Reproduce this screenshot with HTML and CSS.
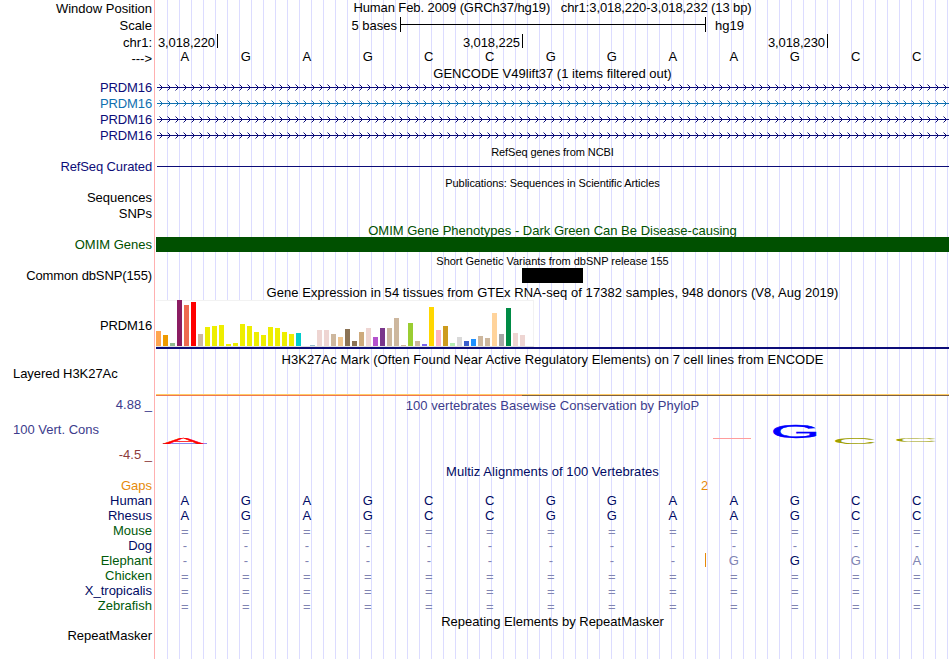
FILE: index.html
```html
<!DOCTYPE html>
<html lang="en">
<head>
  <meta charset="UTF-8">
  <meta name="viewport" content="width=device-width, initial-scale=1.0">
  <title>chr1:3,018,220-3,018,232</title>
  <link rel="stylesheet" href="styles.css">
</head>
<body>
  <div class="browser">
    <!-- Ruler -->
    <div class="row h17"><div class="label">Window Position</div><div class="data title up">Human Feb. 2009 (GRCh37/hg19) &nbsp; chr1:3,018,220-3,018,232 (13 bp)</div></div>
    <div class="row h17">
      <div class="label">Scale</div>
      <div class="data scale">
        <span class="scale-left">5 bases</span>
        <span class="scale-bar"></span>
        <span>hg19</span>
      </div>
    </div>
    <div class="row h16">
      <div class="label lower">chr1:</div>
      <div class="data ruler">
        <span class="first">3,018,220</span>
        <span>3,018,225</span>
        <span>3,018,230</span>
      </div>
    </div>
    <div class="row h16"><div class="label lower">---&gt;</div><div class="data bases dark" data-bases="AGAGCCGGAAGCC"></div></div>

    <!-- Genes -->
    <div class="row h14"><div class="label"></div><div class="data title gencode">GENCODE V49lift37 (1 items filtered out)</div></div>
    <div class="row h16 gene"><div class="label tight">PRDM16</div><div class="data"><svg class="arrows" width="792" height="7"></svg></div></div>
    <div class="row h16 gene light"><div class="label tight">PRDM16</div><div class="data"><svg class="arrows" width="792" height="7"></svg></div></div>
    <div class="row h16 gene"><div class="label tight">PRDM16</div><div class="data"><svg class="arrows" width="792" height="7"></svg></div></div>
    <div class="row h16 gene"><div class="label tight">PRDM16</div><div class="data"><svg class="arrows" width="792" height="7"></svg></div></div>
    <div class="row h15"><div class="label"></div><div class="data title small">RefSeq genes from NCBI</div></div>
    <div class="row h16 gene"><div class="label tight">RefSeq Curated</div><div class="data"><div class="refseq-line"></div></div></div>
    <div class="row h15"><div class="label"></div><div class="data title small">Publications: Sequences in Scientific Articles</div></div>
    <div class="row h16"><div class="label">Sequences</div><div class="data"></div></div>
    <div class="row h16"><div class="label">SNPs</div><div class="data"></div></div>

    <!-- Variants -->
    <div class="row h15 omim"><div class="label"></div><div class="data title lower">OMIM Gene Phenotypes - Dark Green Can Be Disease-causing</div></div>
    <div class="row h16 omim"><div class="label">OMIM Genes</div><div class="data"><div class="omim-bar"></div></div></div>
    <div class="row h15"><div class="label"></div><div class="data title small snp-title">Short Genetic Variants from dbSNP release 155</div></div>
    <div class="row h16"><div class="label tight">Common dbSNP(155)</div><div class="data"><div class="snp"></div></div></div>

    <!-- Expression -->
    <div class="row h16"><div class="label"></div><div class="data title lower wide">Gene Expression in 54 tissues from GTEx RNA-seq of 17382 samples, 948 donors (V8, Aug 2019)</div></div>
    <div class="row h49">
      <div class="label tight">PRDM16</div>
      <div class="data gtex">
        <div class="bars" id="gtexBars"></div>
      </div>
    </div>
    <div class="row h17"><div class="label"></div><div class="data title low wide">H3K27Ac Mark (Often Found Near Active Regulatory Elements) on 7 cell lines from ENCODE</div></div>
    <div class="row h31">
      <div class="label left">Layered H3K27Ac</div>
      <div class="data layered"><div class="layered-line"></div></div>
    </div>

    <!-- Conservation -->
    <div class="row h66 phylop">
      <div class="label cons">
        <span>4.88 _</span>
        <span class="cons-name">100 Vert. Cons</span>
        <span class="cons-min">-4.5 _</span>
      </div>
      <div class="data cons-data">
        <div class="title">100 vertebrates Basewise Conservation by PhyloP</div>
        <svg class="logo" width="793" height="50">
          <rect x="7" y="30" width="44" height="1" fill="#8888ee"/>
          <text transform="translate(7 30.6) scale(3.05 .42)" fill="#ff0000" stroke="#ff0000" stroke-width=".5">A</text>
          <rect x="557" y="25" width="38" height="1" fill="#ff9c9c"/>
          <text transform="translate(614.5 24.8) scale(3.2 .88)" fill="#0000ff" stroke="#0000ff" stroke-width=".4">G</text>
          <text transform="translate(676 31) scale(3.15 .42)" fill="#a0a000">C</text>
          <text transform="translate(737 29) scale(3.15 .28)" fill="#a0a000">C</text>
        </svg>
      </div>
    </div>

    <!-- Alignment -->
    <div class="multiz">
      <div class="row h15"><div class="label"></div><div class="data title wide">Multiz Alignments of 100 Vertebrates</div></div>
      <div class="row species gaps"><div class="label">Gaps</div><div class="data"><span class="gap-count">2</span></div></div>
      <div class="row species"><div class="label">Human</div><div class="data bases" data-bases="AGAGCCGGAAGCC"></div></div>
      <div class="row species"><div class="label">Rhesus</div><div class="data bases" data-bases="AGAGCCGGAAGCC"></div></div>
      <div class="row species green"><div class="label">Mouse</div><div class="data bases" data-bases="============="></div></div>
      <div class="row species"><div class="label">Dog</div><div class="data bases" data-bases="-------------"></div></div>
      <div class="row species green"><div class="label">Elephant</div><div class="data bases" data-bases="---------|gGga"></div></div>
      <div class="row species green"><div class="label">Chicken</div><div class="data bases" data-bases="============="></div></div>
      <div class="row species"><div class="label">X_tropicalis</div><div class="data bases" data-bases="============="></div></div>
      <div class="row species green"><div class="label">Zebrafish</div><div class="data bases" data-bases="============="></div></div>
    </div>
    <div class="row h15"><div class="label"></div><div class="data title">Repeating Elements by RepeatMasker</div></div>
    <div class="row rest"><div class="label">RepeatMasker</div><div class="data"></div></div>
  </div>

  <script>
    // Bases: lower case is a mismatch, | is an insert before the next base
    document.querySelectorAll('.bases').forEach(row => {
      let insert = false;
      for (const c of row.dataset.bases) {
        if (c === '|') {
          insert = true;
          continue;
        }
        const cell = document.createElement('span');
        cell.textContent = c.toUpperCase();
        if (c === '=' || c === '-' || c !== c.toUpperCase()) cell.classList.add('faded');
        if (c === '=') cell.classList.add('equal');
        if (insert) cell.classList.add('insert');
        insert = false;
        row.appendChild(cell);
      }
    });

    // Intron lines with strand arrows every 8px
    let heads = '';
    for (let x = 2.5; x < 792; x += 8) {
      heads += `M${x} .5l3 3l-3 3`;
    }
    document.querySelectorAll('.arrows').forEach(svg => {
      svg.innerHTML = `<path class="intron" d="M0 3.5H792"/><path class="heads" d="${heads}"/>`;
    });

    // GTEx tissues: [height, color]
    const tissues = [
      [15, '#ffa54f'], [11, '#ee9a00'], [3, '#8fbc8f'], [46, '#8b1c62'], [41, '#ee6a50'], [44, '#ff0000'],
      [12, '#cdb79e'], [19, '#eeee00'], [20, '#eeee00'], [21, '#eeee00'], [2, '#eeee00'], [3, '#eeee00'],
      [22, '#eeee00'], [20, '#eeee00'], [14, '#eeee00'], [11, '#eeee00'], [19, '#eeee00'], [18, '#eeee00'],
      [14, '#eeee00'], [12, '#eeee00'], [13, '#00cdcd'], [0, '#ee82ee'], [1, '#9ac0cd'], [16, '#eed5d2'],
      [16, '#eed5d2'], [12, '#cdb79e'], [9, '#eec591'], [17, '#8b7355'], [5, '#8b7355'], [14, '#cdaa7d'],
      [18, '#eed5d2'], [9, '#b452cd'], [18, '#7a378b'], [18, '#cdb79e'], [28, '#cdb79e'], [1, '#cdb79e'],
      [23, '#9acd32'], [5, '#cdb79e'], [2, '#7a67ee'], [39, '#ffd700'], [16, '#ffb6c1'], [20, '#cd9b1d'],
      [3, '#b4eeb4'], [9, '#d9d9d9'], [5, '#3a5fcd'], [7, '#1e90ff'], [10, '#cdb79e'], [8, '#cdb79e'],
      [33, '#ffd39b'], [12, '#a6a6a6'], [38, '#008b45'], [13, '#eed5d2'], [11, '#eed5d2'], [0, '#ff00ff']
    ];
    document.getElementById('gtexBars').innerHTML = tissues.map(([h, color]) =>
      `<i style="height:${h}px;background:${color}"></i>`
    ).join('');
  </script>
</body>
</html>
```
FILE: styles.css
```css
body {
  margin: 0;
  background: #fff;
  font-family: "Liberation Sans", Arial, sans-serif;
  font-size: 13px;
  color: #000;
  overflow: hidden;
}

.browser {
  width: 949px;
  height: 659px;
  display: flex;
  flex-direction: column;
  /* guide lines every 12px */
  background: repeating-linear-gradient(to right, #dcdcff 0, #dcdcff 1px, transparent 1px, transparent 12px) 167px 0 / 782px 100% no-repeat;
}

.row {
  display: flex;
  white-space: nowrap;
  flex: none;
}

.h14 { height: 14px; line-height: 14px; }
.h15 { height: 15px; line-height: 15px; }
.h16 { height: 16px; line-height: 15px; }
.h17 { height: 17px; line-height: 17px; }
.h31 { height: 31px; line-height: 15px; }
.h49 { height: 49px; line-height: 51px; }
.h66 { height: 67px; line-height: 16px; }

.species {
  height: 15px;
  line-height: 13px;
}

.rest {
  flex: 1;
  line-height: 13px;
}

.label {
  width: 155px;
  margin-right: 1px;
  padding-right: 2px;
  box-sizing: border-box;
  border-right: 1px solid #ffb0b0;
  text-align: right;
  flex: none;
}

.label.left {
  text-align: left;
  padding-left: 13px;
  letter-spacing: -.06px;
}

.label.tight {
  letter-spacing: -.12px;
}

.data {
  width: 793px;
  flex: none;
}

.title {
  text-align: center;
}

.title.up {
  line-height: 15px;
  letter-spacing: -.09px;
}

.title.low {
  line-height: 21px;
}

.title.gencode {
  line-height: 15px;
}

.lower {
  line-height: 17px;
}

.wide {
  letter-spacing: .05px;
}

.small {
  font-size: 11px;
  line-height: 17px;
  letter-spacing: -.07px;
}

.small.snp-title {
  letter-spacing: -.02px;
}

/* Ruler */
.scale {
  display: flex;
}

.scale-left {
  width: 241px;
  padding-right: 3px;
  text-align: right;
}

.scale-bar {
  width: 304px;
  height: 15px;
  border-left: 1px solid #000;
  border-right: 1px solid #000;
  margin-right: 9px;
  background: linear-gradient(#000, #000) 0 7px / 100% 1px no-repeat;
}

.ruler {
  display: flex;
  line-height: 17px;
}

.ruler span {
  width: 305px;
  height: 14px;
  padding-right: 2px;
  box-sizing: border-box;
  border-right: 1px solid #000;
  text-align: right;
  letter-spacing: -.08px;
}

.ruler .first {
  width: 62px;
}

.bases {
  display: grid;
  grid-template-columns: repeat(13, 61px);
  text-align: center;
}

.bases span {
  padding-right: 3.4px;
}

.bases.dark {
  line-height: 13px;
}

/* Genes */
.gene {
  color: #0c0c78;
}

.gene.light {
  color: #1070b0;
}

.arrows {
  display: block;
  margin: 4px 0 0 1px;
}

.intron,
.heads {
  fill: none;
  stroke: currentColor;
}

.intron {
  shape-rendering: crispEdges;
}

.heads {
  stroke-width: 1;
}

.refseq-line {
  height: 1px;
  margin: 7px 0 0 1px;
  background: #0c0c78;
}

.omim {
  color: #005000;
}

.omim-bar {
  height: 15px;
  background: #005000;
}

.snp {
  width: 61px;
  height: 15px;
  margin-left: 366px;
  background: #000;
}

/* Expression */
.gtex {
  box-sizing: border-box;
  border-bottom: 2px solid #0c0c78;
}

.bars {
  display: flex;
  align-items: flex-end;
  gap: 2px;
  width: 378px;
  height: 47px;
  box-sizing: border-box;
  border-bottom: 1px solid #e0e0e0;
  background: #fff;
  box-shadow: inset 0 1px #f2f2f2, inset -1px 0 #f2f2f2;
}

.bars i {
  width: 5px;
  flex: none;
}

.layered-line {
  height: 1px;
  margin-top: 28px;
  border-top: 1px solid #ffcc66;
  background: linear-gradient(to right, #f07850 366px, #806040 366px);
}

/* Conservation */
.phylop {
  color: #3c3c8c;
}

.cons {
  display: flex;
  flex-direction: column;
}

.cons-name {
  text-align: left;
  padding: 9px 0 0 13px;
}

.cons-min {
  padding-top: 9px;
  color: #8c3c3c;
}

.cons-data .title {
  height: 16px;
  line-height: 17px;
  letter-spacing: .03px;
}

.logo {
  display: block;
}

.logo text {
  font-size: 20px;
}

/* Alignment */
.multiz {
  color: #000a64;
}

.green .label {
  color: #005a0a;
}

.gaps {
  color: #e68a0a;
}

.gap-count {
  padding-left: 545px;
}

.faded {
  color: #8084b2;
}

.equal {
  line-height: 15px;
}

.bases .insert {
  height: 14px;
  margin-top: -1px;
  line-height: 15px;
  box-shadow: inset 1px 0 #e68a0a;
}
```
